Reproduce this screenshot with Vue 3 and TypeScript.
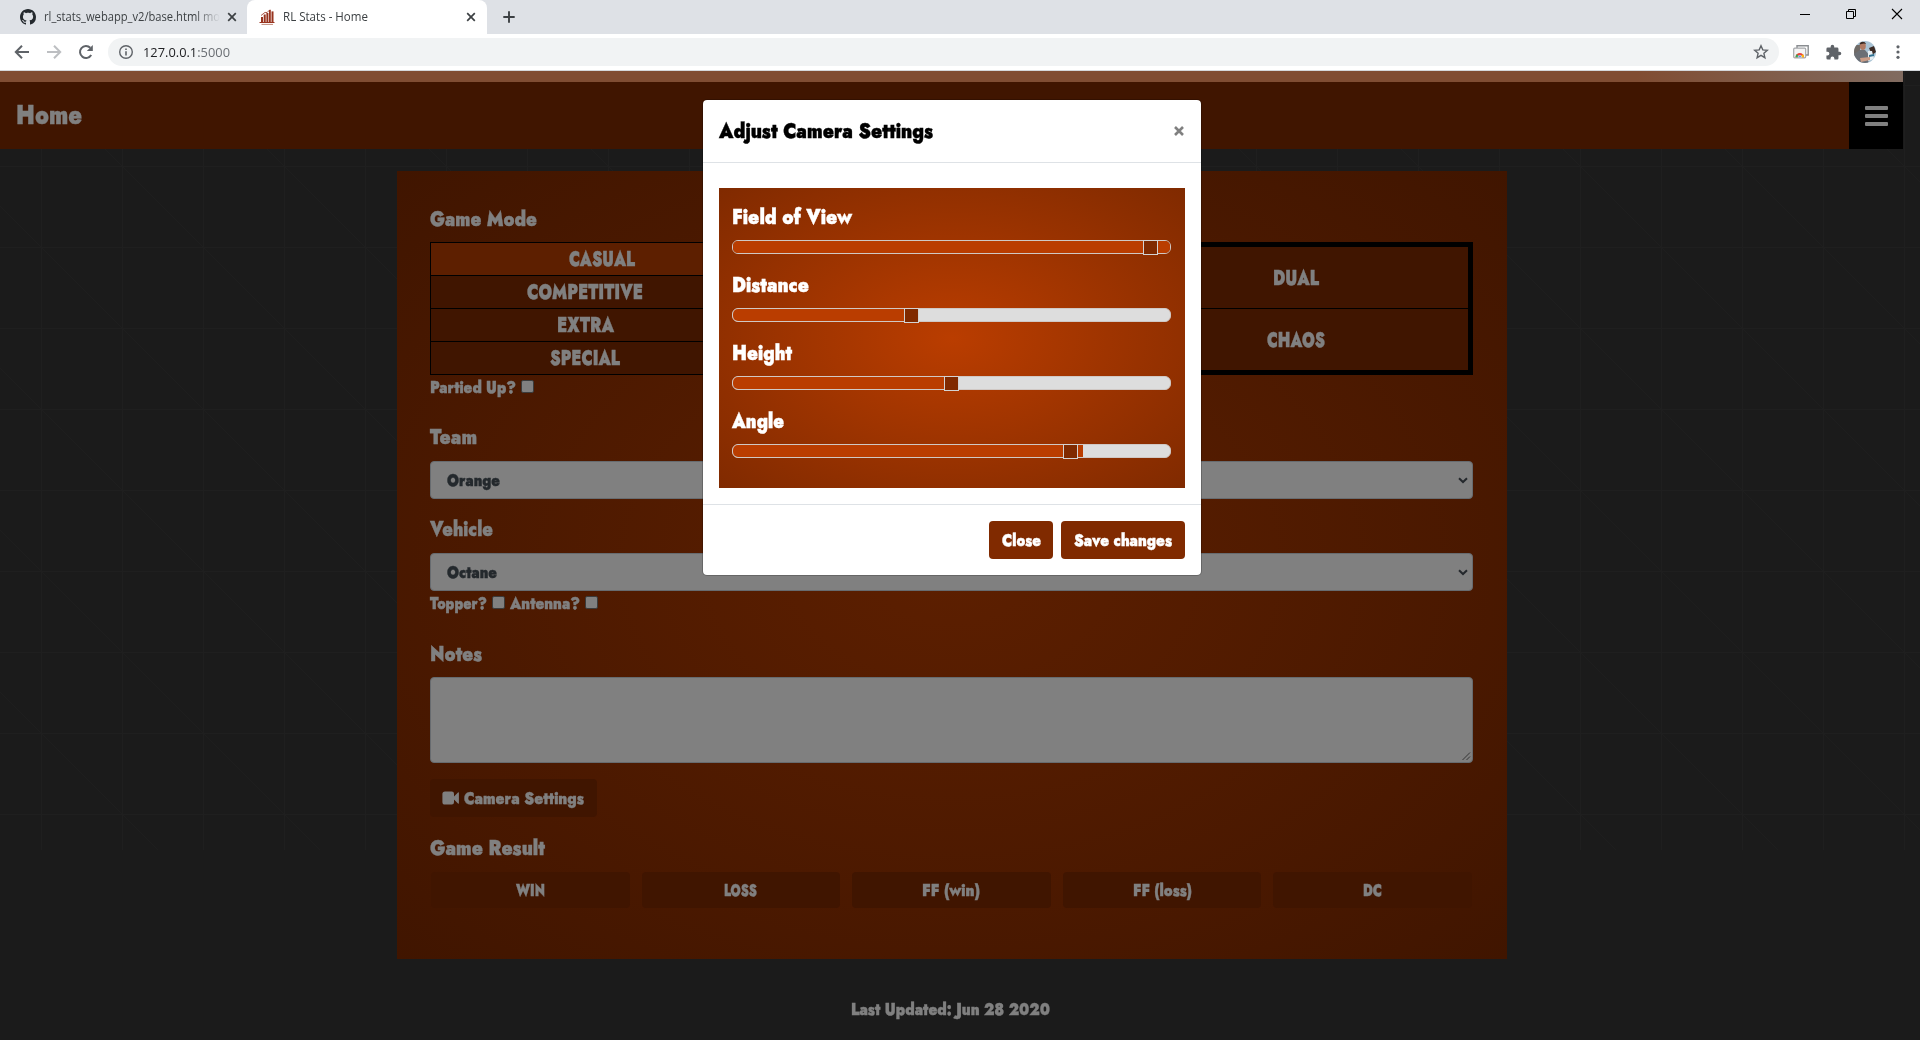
<script setup lang="ts">
import type { Directive } from 'vue'

interface Label { text: string; width: number }
interface Slider extends Label { thumb: number; fill: number }

// Condenses a label horizontally so that it occupies the given width in pixels.
const vFit: Directive<HTMLElement, number> = {
  mounted(el, { value }) {
    const natural = el.getBoundingClientRect().width
    if (!natural) return
    el.style.transform = `scaleX(${value / natural})`
    el.style.marginRight = `${value - natural}px`
  },
}

const modes: (Label & { active?: boolean })[] = [
  { text: 'CASUAL', width: 66, active: true },
  { text: 'COMPETITIVE', width: 116 },
  { text: 'EXTRA', width: 57 },
  { text: 'SPECIAL', width: 70 },
]

const variants: Label[] = [
  { text: 'DUAL', width: 46 },
  { text: 'CHAOS', width: 58 },
]

const results: Label[] = [
  { text: 'WIN', width: 29 },
  { text: 'LOSS', width: 33 },
  { text: 'FF (win)', width: 58 },
  { text: 'FF (loss)', width: 59 },
  { text: 'DC', width: 19 },
]

const sliders: Slider[] = [
  { text: 'Field of View', width: 120, thumb: 411, fill: 437 },
  { text: 'Distance', width: 77, thumb: 172, fill: 180 },
  { text: 'Height', width: 60, thumb: 212, fill: 220 },
  { text: 'Angle', width: 52, thumb: 331, fill: 350 },
]
</script>

<template>
  <div class="window">
    <header class="chrome">
      <div class="tabs">
        <div class="tab">
          <svg class="github" viewBox="0 0 16 16" width="16" height="16"><path fill="#24292e" d="M8 0C3.58 0 0 3.58 0 8c0 3.54 2.29 6.53 5.47 7.59.4.07.55-.17.55-.38 0-.19-.01-.82-.01-1.49-2.01.37-2.53-.49-2.69-.94-.09-.23-.48-.94-.82-1.13-.28-.15-.68-.52-.01-.53.63-.01 1.08.58 1.23.82.72 1.21 1.87.87 2.33.66.07-.52.28-.87.51-1.07-1.78-.2-3.64-.89-3.64-3.95 0-.87.31-1.59.82-2.15-.08-.2-.36-1.02.08-2.12 0 0 .67-.21 2.2.82.64-.18 1.32-.27 2-.27s1.36.09 2 .27c1.53-1.04 2.2-.82 2.2-.82.44 1.1.16 1.92.08 2.12.51.56.82 1.27.82 2.15 0 3.07-1.87 3.75-3.65 3.95.29.25.54.73.54 1.48 0 1.07-.01 1.93-.01 2.2 0 .21.15.46.55.38A8.01 8.01 0 0 0 16 8c0-4.42-3.58-8-8-8z" /></svg>
          <span class="tab-title faded"><span v-fit="176" class="fit">rl_stats_webapp_v2/base.html mo</span></span>
          <svg class="x" viewBox="0 0 10 10" width="10" height="10"><path d="M1.2 1.2 8.8 8.8M8.8 1.2 1.2 8.8" stroke="#3c4043" stroke-width="1.7" /></svg>
        </div>
        <div class="tab active">
          <svg class="favicon" viewBox="0 0 16 16" width="16" height="16">
            <g fill="#98341f"><rect x="2" y="8" width="2" height="5" /><rect x="4.7" y="5.5" width="2" height="7.5" /><rect x="7.4" y="4" width="2" height="9" /><rect x="10" y="1" width="1.8" height="12" /><rect x="12.5" y="2.4" width="2" height="10.6" /><rect x=".5" y="13" width="15" height="1" /></g>
            <path d="M2 6.5 6 3.4l2 .2L11 .6" fill="none" stroke="#98341f" stroke-width=".8" /><path d="M2.5 15.4h11.5" stroke="#c08a7c" stroke-width="1" />
          </svg>
          <span class="tab-title"><span v-fit="85" class="fit">RL Stats - Home</span></span>
          <svg class="x" viewBox="0 0 10 10" width="10" height="10"><path d="M1.2 1.2 8.8 8.8M8.8 1.2 1.2 8.8" stroke="#3c4043" stroke-width="1.7" /></svg>
        </div>
        <svg class="plus" viewBox="0 0 12 12" width="12" height="12"><path d="M6 .3v11.4M.3 6h11.4" stroke="#3c4043" stroke-width="1.9" /></svg>
        <div class="controls">
          <svg viewBox="0 0 12 12" width="12" height="12"><path d="M1 6.5h10" stroke="#000" /></svg>
          <svg viewBox="0 0 12 12" width="12" height="12"><path d="M1.5 3.5h7v7h-7zM3.5 3.5v-2h7v7h-2" fill="none" stroke="#000" /></svg>
          <svg viewBox="0 0 12 12" width="12" height="12"><path d="M1 1 11 11M11 1 1 11" stroke="#000" stroke-width="1.1" /></svg>
        </div>
      </div>
      <div class="toolbar">
        <svg viewBox="0 0 16 16" width="16" height="16"><path d="M15 8H2.4M8 1.8 1.8 8 8 14.2" fill="none" stroke="#5f6368" stroke-width="2" /></svg>
        <svg viewBox="0 0 16 16" width="16" height="16"><path d="M1 8h12.6M8 1.8 14.2 8 8 14.2" fill="none" stroke="#bdbfc2" stroke-width="2" /></svg>
        <svg viewBox="0 0 16 16" width="16" height="16"><path d="M13.2 11A6 6 0 1 1 12.3 3.8" fill="none" stroke="#5f6368" stroke-width="2" /><path d="M14.8 1v6H8.8z" fill="#5f6368" /></svg>
        <div class="omnibox">
          <svg viewBox="0 0 16 16" width="16" height="16"><circle cx="8" cy="8" r="6.3" fill="none" stroke="#5f6368" stroke-width="1.4" /><path d="M8 7.2v4.2M8 4.4v1.6" stroke="#5f6368" stroke-width="1.6" /></svg>
          <span class="url"><span v-fit="87" class="fit">127.0.0.1<i>:5000</i></span></span>
          <svg class="star" viewBox="0 0 16 16" width="16" height="16"><path d="m8 1.8 1.8 4.1 4.5.4-3.4 3 1 4.4L8 11.4l-3.9 2.3 1-4.4-3.4-3 4.5-.4z" fill="none" stroke="#5f6368" stroke-width="1.4" /></svg>
        </div>
        <svg class="cast" viewBox="0 0 18 16" width="18" height="16">
          <path d="M5 4V1.7h11.2V11H14" fill="none" stroke="#8a8d91" stroke-width="1.4" /><rect x="1.7" y="4.2" width="12" height="9.6" rx="1" fill="#f4f4f4" stroke="#a5a7aa" stroke-width="1.2" />
          <path d="M3.5 13.2a4.3 4.3 0 0 1 8.6 0" fill="#ea4335" /><path d="M3.5 13.2a4.3 4.3 0 0 1 1.3-3l3 3z" fill="#34a853" /><path d="M12.1 13.2a4.3 4.3 0 0 0-1.3-3l-3 3z" fill="#fbbc05" /><path d="M6 13.2a1.9 1.9 0 0 1 3.8 0z" fill="#4285f4" stroke="#fff" stroke-width=".5" />
        </svg>
        <svg class="puzzle" viewBox="0 0 24 24" width="17" height="17"><path fill="#5f6368" d="M20.5 11H19V7a2 2 0 0 0-2-2h-4V3.500a2.500 2.500 0 0 0-5 0V5H4a2 2 0 0 0-2 2v3.800h1.500a2.700 2.700 0 0 1 0 5.400H2V20a2 2 0 0 0 2 2h3.800v-1.500a2.700 2.700 0 0 1 5.400 0V22H17a2 2 0 0 0 2-2v-4h1.500a2.500 2.500 0 0 0 0-5z" /></svg>
        <svg class="avatar" viewBox="0 0 22 22" width="22" height="22">
          <defs><clipPath id="face"><circle cx="11" cy="11" r="11" /></clipPath></defs>
          <g clip-path="url(#face)"><rect width="22" height="22" fill="#a9c3d4" /><path d="M0 4h6v12H0z" fill="#6f6a66" /><path d="M0 22V13l6-4h5l5 6-2 7z" fill="#6b6f75" /><ellipse cx="8.800" cy="5" rx="3" ry="4" fill="#b07a62" /><path d="M5.500 3.500C6 0 11 0 12 3l-2-.5z" fill="#3b2a23" /><path d="M15 7l5-2 2 6-4 3z" fill="#3d2b24" /><path d="M14 10l4 0 2 8-6 2z" fill="#e6eef3" /><path d="M15 14l5-1v2l-5 1z" fill="#2f7191" /><path d="M6 17l10-1v3l-9 2z" fill="#c99c86" /></g>
        </svg>
        <svg class="dots" viewBox="0 0 4 16" width="4" height="16"><g fill="#5f6368"><circle cx="2" cy="2.800" r="1.600" /><circle cx="2" cy="8" r="1.600" /><circle cx="2" cy="13.300" r="1.600" /></g></svg>
      </div>
    </header>

    <main class="viewport">
      <svg class="grid" width="1920" height="779">
        <defs>
          <pattern id="mesh" width="162" height="162" x="41" y="14" patternUnits="userSpaceOnUse">
            <path d="M.5 0V162M81.500 0V162M0 .5H162M0 81.500H162" stroke="#1f1f1f" />
            <path d="M0 0 162 162" stroke="#1f1f1f" stroke-width=".7" />
          </pattern>
        </defs>
        <rect width="1920" height="779" fill="url(#mesh)" />
      </svg>
      <div class="page">
        <div class="strip"></div>
        <nav class="nav">
          <h1><span v-fit="66" class="fit">Home</span></h1>
          <button class="menu" type="button" aria-label="Menu"><b></b><b></b><b></b></button>
        </nav>

        <section class="card">
          <h2><span v-fit="107" class="fit">Game Mode</span></h2>
          <div class="tables">
            <div class="modes">
              <div v-for="m in modes" :key="m.text" class="mode" :class="{ on: m.active }"><span v-fit="m.width" class="fit">{{ m.text }}</span></div>
            </div>
            <div class="variants">
              <div v-for="v in variants" :key="v.text" class="variant"><span v-fit="v.width" class="fit">{{ v.text }}</span></div>
            </div>
          </div>
          <div class="checks"><span v-fit="86" class="fit">Partied Up?</span><i class="box"></i></div>

          <h2 class="team"><span v-fit="47" class="fit">Team</span></h2>
          <div class="select"><span v-fit="53" class="fit">Orange</span><svg viewBox="0 0 10 7" width="10" height="7"><path d="M1 1.200 5 5l4-3.800" fill="none" stroke="#24282c" stroke-width="2" /></svg></div>
          <h2 class="vehicle"><span v-fit="63" class="fit">Vehicle</span></h2>
          <div class="select"><span v-fit="50" class="fit">Octane</span><svg viewBox="0 0 10 7" width="10" height="7"><path d="M1 1.200 5 5l4-3.800" fill="none" stroke="#24282c" stroke-width="2" /></svg></div>
          <div class="checks"><span v-fit="57" class="fit">Topper?</span><i class="box"></i><span v-fit="70" class="fit second">Antenna?</span><i class="box"></i></div>

          <h2 class="notes"><span v-fit="52" class="fit">Notes</span></h2>
          <div class="textarea"><svg viewBox="0 0 10 10" width="10" height="10"><path d="M1.500 9 9 1.500M5.500 9 9 5.500" stroke="#2c2c2c" stroke-width=".9" /></svg></div>

          <button class="camera" type="button">
            <svg viewBox="0 0 17 14" width="17" height="14"><path fill="#808080" d="M3 .5h6.800a2.200 2.200 0 0 1 2.200 2.200v8.600a2.200 2.200 0 0 1-2.200 2.200H3A2.600 2.600 0 0 1 .4 10.900V3.100A2.600 2.600 0 0 1 3 .5zM11.500 6 16 1.400c.4-.3.900-.1.900.4v10.400c0 .5-.5.7-.9.400L11.500 8z" /></svg>
            <span v-fit="120" class="fit">Camera Settings</span>
          </button>

          <h2 class="result"><span v-fit="115" class="fit">Game Result</span></h2>
          <div class="results">
            <button v-for="r in results" :key="r.text" type="button"><span v-fit="r.width" class="fit">{{ r.text }}</span></button>
          </div>
        </section>

        <footer class="updated"><span v-fit="199" class="fit">Last Updated: Jun 28 2020</span></footer>
      </div>

      <div class="modal" role="dialog">
        <div class="modal-head">
          <h3><span v-fit="214" class="fit">Adjust Camera Settings</span></h3>
          <svg viewBox="0 0 10 10" width="10" height="10"><path d="M1 1 9 9M9 1 1 9" stroke="#808080" stroke-width="2.600" /></svg>
        </div>
        <div class="modal-body">
          <div class="sliders">
            <div v-for="s in sliders" :key="s.text" class="slider">
              <h4><span v-fit="s.width" class="fit">{{ s.text }}</span></h4>
              <div class="track">
                <div class="rail"><div class="fill" :style="{ width: s.fill + 'px' }"></div></div>
                <div class="thumb" :style="{ left: s.thumb + 'px' }"></div>
              </div>
            </div>
          </div>
        </div>
        <div class="modal-foot">
          <button class="close" type="button"><span v-fit="39" class="fit">Close</span></button>
          <button class="save" type="button"><span v-fit="98" class="fit">Save changes</span></button>
        </div>
      </div>
    </main>
  </div>
</template>

<style>
body { overflow: hidden; background: #1b1b1b; }
</style>

<style scoped>
.window { width: 1920px; height: 1040px; display: flex; flex-direction: column; overflow: hidden; font-family: "Jost", "Open Sans", sans-serif; font-weight: 900; font-size: 17px; color: #808080; }
.window * { box-sizing: border-box; }
h1, h2, h3, h4 { margin: 0; font-weight: 900; font-size: 21px; line-height: 24px; }
button { border: 0; padding: 0; font: inherit; color: inherit; }
svg { display: block; flex: none; }
.fit { display: inline-block; white-space: nowrap; transform-origin: 0 50%; flex: none; }
.viewport .fit { -webkit-text-stroke: .35px currentColor; }

.chrome { flex: none; height: 71px; background: #fff; border-bottom: 1px solid #d5d8dc; font-family: "Open Sans", "Noto Sans", sans-serif; font-weight: 400; font-size: 12px; color: #3c4043; }
.tabs { height: 34px; display: flex; align-items: center; background: #dee1e6; }
.tab { width: 247px; height: 34px; display: flex; align-items: center; padding: 0 10px 0 20px; }
.tab.active { width: 240px; padding: 0 11px 0 12px; background: #fff; border-radius: 8px 8px 0 0; }
.tab-title { flex: 1; min-width: 0; margin-left: 8px; line-height: 20px; overflow: hidden; }
.faded { flex: 0 0 176px; margin-right: 7px; -webkit-mask-image: linear-gradient(90deg, #000 86%, transparent); mask-image: linear-gradient(90deg, #000 86%, transparent); }
.plus { margin-left: 16px; }
.controls { margin-left: auto; display: flex; gap: 34px; padding-right: 17px; margin-top: -6px; }
.toolbar { height: 36px; display: flex; align-items: center; padding: 0 20px 0 14px; }
.toolbar > svg { margin-right: 16px; }
.omnibox { width: 1673px; height: 28px; margin-left: -2px; display: flex; align-items: center; padding: 0 10px; border-radius: 14px; background: #f1f3f4; }
.url { margin-left: 9px; font-size: 13px; line-height: 20px; color: #202124; }
.url i { font-style: normal; color: #6a6e73; }
.star { margin-left: auto; }
.toolbar > .cast { margin: 0 15px 0 13px; }
.toolbar > .puzzle { margin-right: 12px; }
.toolbar > .avatar { margin-right: 20px; }
.toolbar > .dots { margin-right: 0; }

.viewport { flex: 1; position: relative; background: #1b1b1b; overflow: hidden; }
.grid { position: absolute; left: 0; top: 0; }
.page { position: relative; width: 1903px; }
.strip { height: 11px; background: linear-gradient(90deg, #804d33 86%, #806b60 100%); }
.nav { height: 67px; display: flex; align-items: center; justify-content: space-between; padding-left: 16px; background: #401500; }
.nav h1 { font-size: 28px; line-height: 32px; padding-bottom: 1px; }
.menu { width: 54px; height: 67px; display: flex; flex-direction: column; align-items: center; justify-content: center; gap: 4px; background: #000; }
.menu b { width: 23px; height: 4px; border-radius: 1px; background: #808080; }

.card { width: 1110px; height: 788px; margin: 22px 0 0 397px; padding: 36px 34px 0 33px; background: radial-gradient(#5d1f00, #401500); }
.tables { display: flex; justify-content: space-between; height: 133px; margin-top: 11px; font-size: 21px; line-height: 24px; }
.modes { width: 310px; border: 1px solid #000; background: #000; display: flex; flex-direction: column; gap: 1px; }
.mode { flex: 1; display: flex; align-items: center; justify-content: center; background: #401500; }
.mode.on { background: #5d1f00; padding-left: 34px; }
.variants { width: 354px; border: 5px solid #000; background: #000; display: flex; flex-direction: column; gap: 1px; }
.variant { flex: 1; display: flex; align-items: center; justify-content: center; background: #401500; }
.checks { height: 24px; display: flex; align-items: center; }
.box { width: 13px; height: 13px; margin: -1px 0 0 5px; border: 1px solid #3b3b3b; border-radius: 2px; background: #808080; }
.second { margin-left: 5px; }
.team { margin: 26px 0 12px; }
.vehicle { margin: 18px 0 12px; }
.notes { margin: 27px 0 11px; }
.result { margin: 19px 0 12px; }
.select { height: 38px; display: flex; align-items: center; justify-content: space-between; padding: 0 4px 0 16px; border: 1px solid #676b6f; border-radius: 4px; background: #808080; color: #24292d; }
.textarea { height: 86px; display: flex; align-items: flex-end; justify-content: flex-end; padding: 1px; border: 1px solid #676b6f; border-radius: 4px; background: #808080; }
.camera { width: 167px; height: 38px; margin-top: 16px; display: flex; align-items: center; padding-left: 12px; gap: 5px; border-radius: 4px; background: #401500; }
.results { display: flex; gap: 12px; padding: 0 1px; }
.results button { flex: 1; height: 36px; display: flex; align-items: center; justify-content: center; border-radius: 4px; background: #401500; }
.updated { display: flex; justify-content: center; margin-top: 38px; line-height: 24px; padding-right: 2px; }

.modal { position: absolute; left: 702px; top: 28px; width: 500px; height: 477px; border: 1px solid rgba(0, 0, 0, .2); border-radius: 5px; background: #fff; background-clip: padding-box; }
.modal-head { height: 63px; display: flex; align-items: center; justify-content: space-between; padding: 0 17px 0 16px; border-bottom: 1px solid #dee2e6; color: #000; }
.modal-body { padding: 25px 16px 16px; }
.sliders { height: 300px; padding: 17px 14px 0 13px; background: radial-gradient(#ba3d00, #802a00); color: #fff; }
.slider { height: 68px; }
.slider h4 { margin-bottom: 11px; }
.track { position: relative; height: 14px; }
.rail { height: 14px; border: 1px solid #d0c8c4; border-radius: 6px; background: #ddd; overflow: hidden; }
.fill { height: 12px; background: #ba3d00; }
.thumb { position: absolute; top: 0; width: 15px; height: 15px; border: 1px solid #d3d3d3; background: #802a00; }
.modal-foot { display: flex; justify-content: flex-end; gap: 8px; padding: 16px; border-top: 1px solid #dee2e6; color: #fff; }
.modal-foot button { height: 38px; display: flex; align-items: center; justify-content: center; border-radius: 4px; background: #802a00; }
.modal-foot .close { width: 64px; }
.modal-foot .save { width: 124px; }
</style>
